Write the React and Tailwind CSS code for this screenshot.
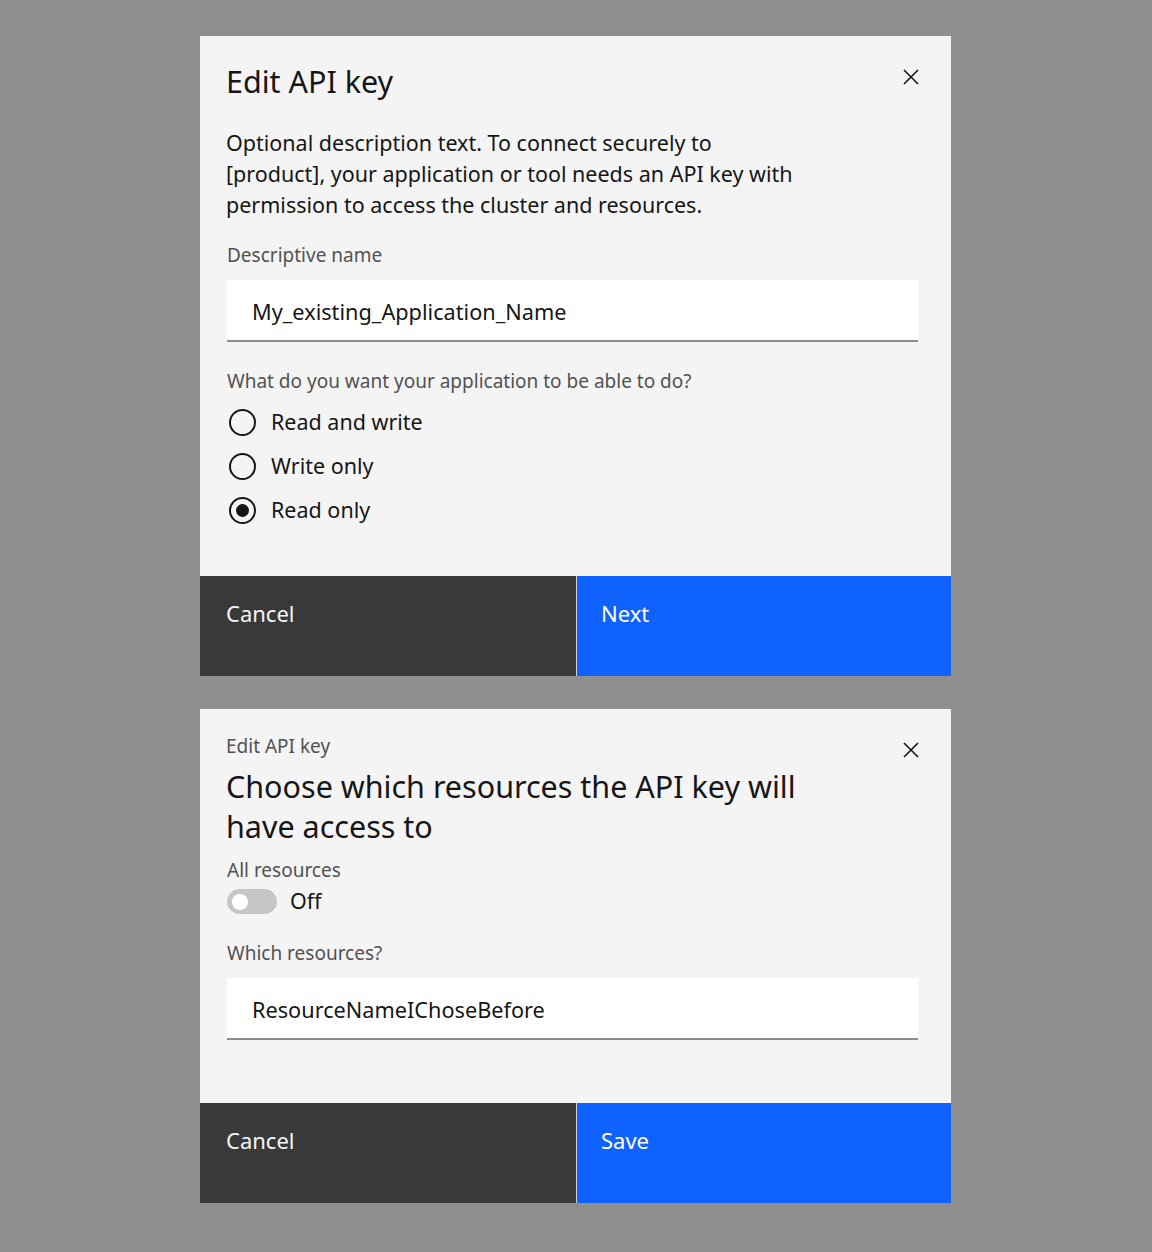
import React from "react";

const CloseIcon = () => (
  <svg width="16" height="16" viewBox="0 0 16 16" fill="none" stroke="#161616" strokeWidth="1.6">
    <path d="M1 1 L15 15 M15 1 L1 15" />
  </svg>
);

const Radio = ({ label, checked }) => (
  <div className="flex items-center h-[44px]">
    <div className="w-[27px] h-[27px] ml-[2px] rounded-full border-2 border-[#161616] flex items-center justify-center">
      {checked && <div className="w-[13px] h-[13px] rounded-full bg-[#161616]" />}
    </div>
    <span className="ml-[15px] text-[21.5px] leading-[30px] text-[#161616]">{label}</span>
  </div>
);

const Footer = ({ primary }) => (
  <div className="flex h-[100px] mt-auto">
    <button type="button" className="w-[376px] bg-[#393939] text-[#f4f4f4] text-left pl-[26px] pt-[23px] text-[22px] leading-[28px] flex items-start">
      Cancel
    </button>
    <div className="w-px bg-[#d0d0d0]" />
    <button type="button" className="flex-1 bg-[#0f62fe] text-white text-left pl-[24px] pt-[23px] text-[22px] leading-[28px] flex items-start">
      {primary}
    </button>
  </div>
);

const TextInput = ({ value }) => (
  <div className="ml-[27px] mr-[33px] h-[62px] bg-white border-b-2 border-[#8d8d8d] flex items-center pt-[4px] pl-[25px] text-[21.7px] text-[#161616]">
    {value}
  </div>
);

export default function App() {
  return (
    <div
      className="min-h-[1252px] bg-[#8f8f8f] flex flex-col pl-[200px] pt-[36px] gap-[33px]"
      style={{ fontFamily: '"Noto Sans", sans-serif' }}
    >
      {/* First step */}
      <div className="w-[751px] h-[640px] bg-[#f4f4f4] flex flex-col">
        <div className="flex justify-between items-start pt-[25px] pl-[26px] pr-[32px]">
          <h2 className="text-[30.5px] leading-[40px] text-[#161616]">Edit API key</h2>
          <button type="button" className="mt-[8px]"><CloseIcon /></button>
        </div>
        <p className="mt-[26px] px-[26px] w-[632px] text-[21.5px] leading-[31px] text-[#161616]">
          Optional description text. To connect securely to [product], your application or tool needs an API key with permission to access the cluster and resources.
        </p>
        <label className="mt-[23px] ml-[27px] text-[19px] leading-[24px] text-[#525252]">Descriptive name</label>
        <div className="mt-[13px]">
          <TextInput value="My_existing_Application_Name" />
        </div>
        <div className="mt-[27px] ml-[27px] text-[19px] leading-[24px] text-[#525252]">
          What do you want your application to be able to do?
        </div>
        <div className="mt-[7px] ml-[27px] flex flex-col">
          <Radio label="Read and write" />
          <Radio label="Write only" />
          <Radio label="Read only" checked />
        </div>
        <Footer primary="Next" />
      </div>

      {/* Second step */}
      <div className="w-[751px] h-[494px] bg-[#f4f4f4] flex flex-col">
        <div className="flex justify-between items-start pt-[25px] pl-[26px] pr-[32px]">
          <div>
            <div className="text-[19px] leading-[24px] text-[#525252]">Edit API key</div>
            <h2 className="mt-[8px] w-[600px] text-[30.5px] leading-[40px] text-[#161616]">
              Choose which resources the API key will have access to
            </h2>
          </div>
          <button type="button" className="mt-[8px]"><CloseIcon /></button>
        </div>
        <div className="mt-[12px] ml-[27px] text-[19px] leading-[24px] text-[#525252]">All resources</div>
        <div className="mt-[7px] ml-[27px] flex items-center h-[25px]">
          <div className="w-[50px] h-[25px] rounded-full bg-[#c6c6c6] flex items-center pl-[5px]">
            <div className="w-[16px] h-[16px] rounded-full bg-white" />
          </div>
          <span className="ml-[13px] text-[21.5px] text-[#161616]">Off</span>
        </div>
        <div className="mt-[27px] ml-[27px] text-[19px] leading-[24px] text-[#525252]">Which resources?</div>
        <div className="mt-[13px]">
          <TextInput value="ResourceNameIChoseBefore" />
        </div>
        <Footer primary="Save" />
      </div>
    </div>
  );
}
